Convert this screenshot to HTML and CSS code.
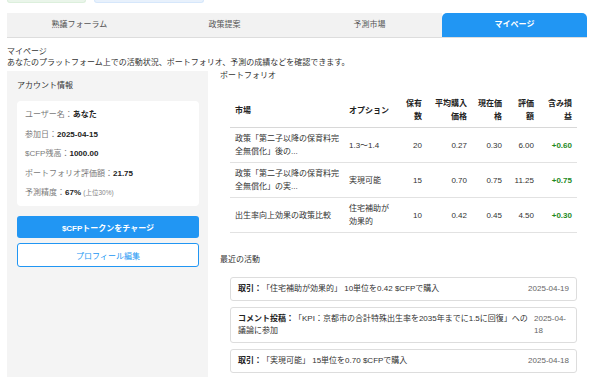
FILE: index.html
```html
<!DOCTYPE html>
<html lang="ja">
<head>
    <meta charset="UTF-8" />
    <meta name="viewport" content="width=device-width, initial-scale=1.0" />
    <title>マイページ</title>
    <link rel="stylesheet" href="styles.css">
</head>
<body>
    <div class="pagina">

        <div class="resumen">
            <div class="caja caja-verde"></div>
            <div class="caja caja-azul"></div>
        </div>

        <nav class="pestanas">
            <div class="pestana">熟議フォーラム</div>
            <div class="pestana">政策提案</div>
            <div class="pestana">予測市場</div>
            <div class="pestana activa">マイページ</div>
        </nav>

        <p class="titulo">マイページ</p>
        <p class="descripcion">あなたのプラットフォーム上での活動状況、ポートフォリオ、予測の成績などを確認できます。</p>

        <div class="contenido">
            <aside class="lateral">
                <h3 class="lateral-titulo">アカウント情報</h3>
                <div class="tarjeta">
                    <p class="dato"><span class="etiqueta">ユーザー名：</span><b>あなた</b></p>
                    <p class="dato"><span class="etiqueta">参加日：</span><b>2025-04-15</b></p>
                    <p class="dato"><span class="etiqueta">$CFP残高：</span><b>1000.00</b></p>
                    <p class="dato"><span class="etiqueta">ポートフォリオ評価額：</span><b>21.75</b></p>
                    <p class="dato"><span class="etiqueta">予測精度：</span><b>67%</b> <small>(上位30%)</small></p>
                </div>
                <button type="button" class="boton boton-azul">$CFPトークンをチャージ</button>
                <button type="button" class="boton boton-borde">プロフィール編集</button>
            </aside>

            <section class="principal">
                <h3 class="seccion">ポートフォリオ</h3>
                <div class="panel">
                    <table class="tabla">
                        <colgroup>
                            <col style="width:114px">
                            <col style="width:56px">
                            <col style="width:27px">
                            <col style="width:45px">
                            <col style="width:35px">
                            <col style="width:32px">
                            <col style="width:38px">
                        </colgroup>
                        <thead>
                            <tr>
                                <th>市場</th>
                                <th>オプション</th>
                                <th class="num">保有数</th>
                                <th class="num">平均購入価格</th>
                                <th class="num">現在価格</th>
                                <th class="num">評価額</th>
                                <th class="num">含み損益</th>
                            </tr>
                        </thead>
                        <tbody>
                            <tr>
                                <td>政策「第二子以降の保育料完全無償化」後の...</td>
                                <td>1.3〜1.4</td>
                                <td class="num">20</td>
                                <td class="num">0.27</td>
                                <td class="num">0.30</td>
                                <td class="num">6.00</td>
                                <td class="num ganancia">+0.60</td>
                            </tr>
                            <tr>
                                <td>政策「第二子以降の保育料完全無償化」の実...</td>
                                <td>実現可能</td>
                                <td class="num">15</td>
                                <td class="num">0.70</td>
                                <td class="num">0.75</td>
                                <td class="num">11.25</td>
                                <td class="num ganancia">+0.75</td>
                            </tr>
                            <tr>
                                <td>出生率向上効果の政策比較</td>
                                <td>住宅補助が効果的</td>
                                <td class="num">10</td>
                                <td class="num">0.42</td>
                                <td class="num">0.45</td>
                                <td class="num">4.50</td>
                                <td class="num ganancia">+0.30</td>
                            </tr>
                        </tbody>
                    </table>
                </div>

                <h3 class="seccion seccion-abajo">最近の活動</h3>
                <div class="panel">
                    <div class="actividad">
                        <p class="texto"><b>取引：</b>「住宅補助が効果的」 10単位を0.42 $CFPで購入</p>
                        <span class="fecha">2025-04-19</span>
                    </div>
                    <div class="actividad">
                        <p class="texto"><b>コメント投稿：</b>「KPI：京都市の合計特殊出生率を2035年までに1.5に回復」への議論に参加</p>
                        <span class="fecha">2025-04-18</span>
                    </div>
                    <div class="actividad">
                        <p class="texto"><b>取引：</b>「実現可能」 15単位を0.70 $CFPで購入</p>
                        <span class="fecha">2025-04-18</span>
                    </div>
                </div>
            </section>
        </div>
    </div>
</body>
</html>
```

FILE: styles.css
```css
body {
    margin: 0;
    padding: 0;
    background-color: #ffffff;
    font-family: "Liberation Sans", "Noto Sans CJK JP", sans-serif;
    font-size: 8px;
    color: #333333;
    overflow: hidden;
    text-spacing-trim: space-all;
}
.pagina {
    padding: 0 6px 0 7px;
}

/* cajas de arriba (cortadas) */
.resumen {
    display: flex;
    gap: 8px;
    height: 3px;
}
.caja {
    height: 2px;
    border-radius: 0 0 3px 3px;
}
.caja-verde {
    width: 77px;
    background-color: #eaf5ea;
    border: 1px solid #dcefdc;
    border-top: none;
}
.caja-azul {
    width: 108px;
    background-color: #e8f1fc;
    border: 1px solid #d6e7fb;
    border-top: none;
}

.pestanas {
    display: flex;
    margin-top: 10px;
    border-bottom: 1px solid #dddddd;
}
.pestana {
    flex: 1;
    height: 24px;
    line-height: 24px;
    text-align: center;
    background-color: #f2f2f2;
    color: #555555;
}
.activa {
    background-color: #2196f3;
    color: white;
    font-weight: bold;
    border-radius: 5px 5px 0 0;
}

.titulo {
    margin: 9px 0 0;
    line-height: 10px;
}
.descripcion {
    margin: 1px 0 0;
    line-height: 10px;
}

.contenido {
    display: grid;
    grid-template-columns: 201px 1fr;
    gap: 12px;
    margin-top: 3px;
}

.lateral {
    background-color: #f4f4f4;
    padding: 10px 9px 10px 10px;
    min-height: 300px;
}
.lateral-titulo {
    margin: 0 0 10px;
    font-size: 8px;
    font-weight: normal;
    line-height: 10px;
}
.tarjeta {
    background-color: white;
    border-radius: 4px;
    padding: 8px;
}
.dato {
    margin: 0 0 8.5px;
    line-height: 11px;
    color: #222;
}
.dato:last-child {
    margin-bottom: 0;
}
.etiqueta {
    color: #7a7a7a;
}
.dato small {
    font-size: 6.5px;
    color: #888;
}

.boton {
    display: block;
    width: 100%;
    font-family: inherit;
    font-size: 8px;
    border-radius: 3px;
    cursor: pointer;
}
.boton-azul {
    margin-top: 10px;
    height: 22px;
    background-color: #2196f3;
    color: white;
    font-weight: bold;
    border: none;
}
.boton-borde {
    margin-top: 5px;
    height: 24px;
    background-color: white;
    color: #2196f3;
    border: 1px solid #2196f3;
}

.seccion {
    margin: 0;
    font-size: 8px;
    font-weight: normal;
    line-height: 10px;
}
.seccion-abajo {
    margin-top: 22px;
}
.panel {
    padding: 0 10px;
    margin-top: 12px;
}

.tabla {
    width: 347px;
    table-layout: fixed;
    border-collapse: collapse;
}
.tabla th, .tabla td {
    padding: 4px 5px;
    line-height: 13px;
    text-align: left;
    vertical-align: middle;
    border-bottom: 1px solid #e2e2e2;
}
.tabla th {
    font-weight: bold;
    color: #222;
    border-bottom: 1px solid #d8d8d8;
}
.tabla .num {
    text-align: right;
}
.ganancia {
    color: #1e8a1e;
    font-weight: bold;
}

.actividad {
    display: flex;
    align-items: flex-start;
    gap: 6px;
    padding: 5px 7px;
    margin-bottom: 6px;
    border: 1px solid #dddddd;
    border-radius: 3px;
    background-color: white;
    line-height: 12px;
}
.texto {
    margin: 0;
    flex: 1 1 auto;
    min-width: 0;
    color: #333;
}
.texto b {
    color: #222;
}
.fecha {
    flex: 0 20 auto;
    min-width: 35px;
    color: #666;
}
```
